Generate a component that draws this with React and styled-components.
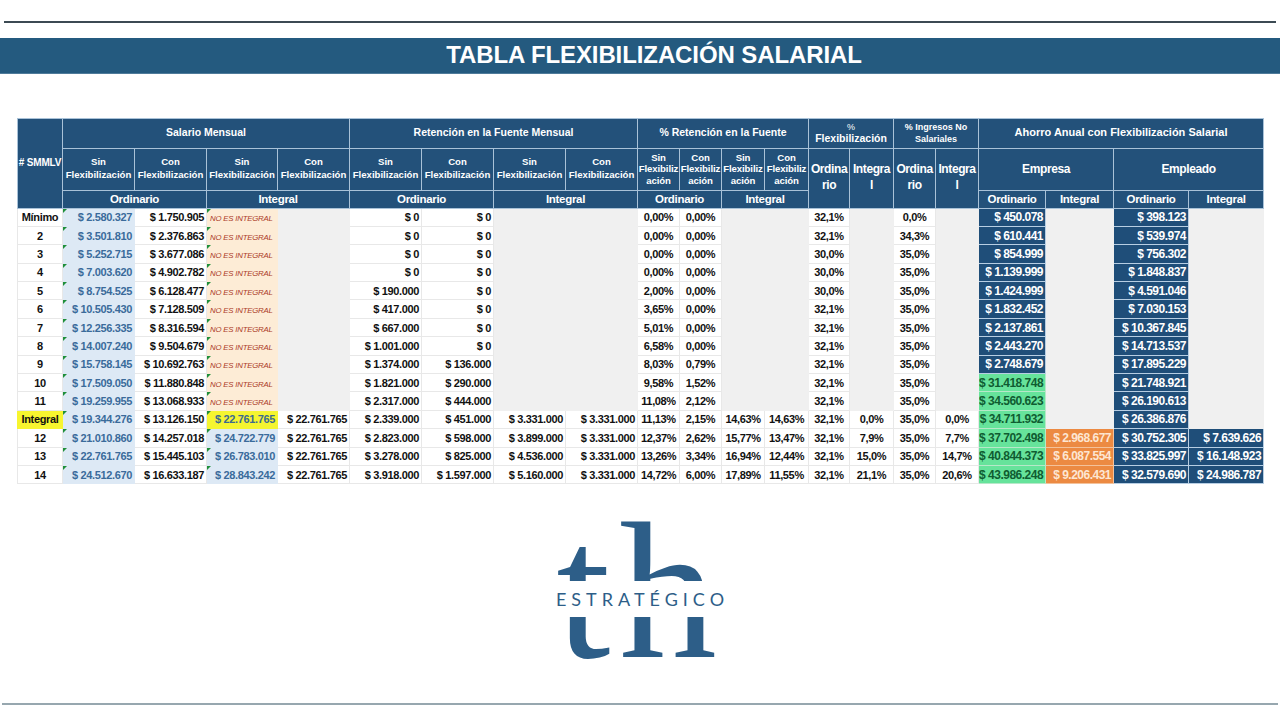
import React from 'react';
import styled, { createGlobalStyle, css } from 'styled-components';

const SANS = '"Liberation Sans", Arial, sans-serif';

const GlobalStyle = createGlobalStyle`
  html, body {
    margin: 0;
    padding: 0;
    background: #ffffff;
  }
  body {
    font-family: ${SANS};
  }
`;

const Page = styled.div`
  width: 1280px;
  height: 720px;
  display: flex;
  flex-direction: column;
  overflow: hidden;
`;

const TopRule = styled.div`
  margin: 21px 4px 0;
  height: 1.5px;
  background: #3c4a53;
`;

const TitleBar = styled.h1`
  margin: 15px 0 0;
  padding-left: 28px;
  height: 35px;
  background: #245a7f;
  border-bottom: 1px solid #4f7b9a;
  display: flex;
  align-items: center;
  justify-content: center;
  color: #ffffff;
  font: 700 24px ${SANS};
  letter-spacing: -0.1px;
`;

const TableWrap = styled.div`
  padding: 44px 0 0 17px;
`;

const Grid = styled.table`
  border-collapse: collapse;
  table-layout: fixed;
  width: 1246px;
`;

const HeadRow = styled.tr`
  height: ${(p) => p.$h}px;
`;

const Th = styled.th`
  background: #23517a;
  color: #ffffff;
  border: 1px solid #a9c2d8;
  padding: 0;
  font-family: ${SANS};
  font-size: ${(p) => p.$size || 10}px;
  font-weight: 700;
  letter-spacing: ${(p) => p.$ls || 0}px;
  line-height: ${(p) => p.$lh || 1.25};
  text-align: center;
  vertical-align: middle;
  white-space: nowrap;
  overflow: hidden;
`;

const Pct = styled.span`
  display: block;
  font-size: 9px;
  font-weight: 400;
`;

const BodyRow = styled.tr`
  height: 18.4px;
`;

const tones = {
  white: css`
    background: #ffffff;
    color: #111111;
    border-color: #e8e8e8;
  `,
  label: css`
    background: #ffffff;
    color: #111111;
    border-color: #e8e8e8;
  `,
  mark: css`
    background: #f7f52f;
    color: #111111;
    border-color: #f7f52f;
  `,
  blue: css`
    background: #dde9f5;
    color: #3a6b9b;
    border-color: #dde9f5;
  `,
  yellow: css`
    background: #f5f530;
    color: #3b6a90;
    border-color: #f5f530;
  `,
  note: css`
    background: #fdecd6;
    color: #ac3b28;
    border-color: #fdecd6;
  `,
  grey: css`
    background: #f0f0f0;
    border-color: #f0f0f0;
  `,
  navy: css`
    background: #1f4e79;
    color: #ffffff;
    border-color: #b7cee3;
  `,
  green: css`
    background: #66e39b;
    color: #0f5c31;
    border-color: #b7e8c9;
  `,
  orange: css`
    background: #ec8a42;
    color: #fde6d2;
    border-color: #f3c29b;
  `,
};

const Td = styled.td`
  position: relative;
  padding: 0 ${(p) => (p.$align === 'right' ? 2 : 0)}px 0 ${(p) => (p.$align === 'left' ? 3 : 0)}px;
  border: 1px solid;
  font-family: ${SANS};
  font-size: ${(p) => (p.$big ? 12 : 11)}px;
  letter-spacing: ${(p) => (p.$big ? -0.5 : -0.35)}px;
  font-weight: 700;
  white-space: nowrap;
  overflow: hidden;
  text-align: ${(p) => p.$align || 'center'};
  vertical-align: middle;
  ${(p) => tones[p.$tone || 'white']}
  ${(p) =>
    p.$flag &&
    css`
      &::before {
        content: '';
        position: absolute;
        top: 0;
        left: 0;
        border-top: 4px solid #1f8f3a;
        border-right: 4px solid transparent;
      }
    `}
`;

const NoteText = styled.span`
  font-family: ${SANS};
  font-size: 7.8px;
  font-style: italic;
  font-weight: 400;
  letter-spacing: -0.2px;
`;

const LogoArea = styled.div`
  display: flex;
  justify-content: center;
  margin-top: 10px;
`;

const LogoMark = styled.div`
  position: relative;
  margin-left: 2px;
  font: 400 195px/1 "Liberation Serif", "Times New Roman", serif;
  color: #2d5e88;
  letter-spacing: 9px;
`;

const LogoWord = styled.span`
  position: absolute;
  top: 87px;
  left: 50%;
  transform: translateX(-50%);
  background: #ffffff;
  padding: 9px 3px 9px 6px;
  font: 400 18px/18px Lato, "Open Sans", sans-serif;
  letter-spacing: 5px;
  color: #2d5e88;
  white-space: nowrap;
`;

const BottomRule = styled.div`
  margin: auto 2px 15px;
  height: 2px;
  background: #97a7af;
`;

const colWidths = [45, 72, 72, 71, 72, 72, 72, 72, 72, 42, 42, 43, 44, 41, 44, 42, 43, 67, 68, 75, 75];

const ordinary = [
  ['Mínimo', '$ 2.580.327', '$ 1.750.905', '$ 0', '$ 0', '0,00%', '0,00%', '32,1%', '0,0%', '$ 450.078', '$ 398.123'],
  ['2', '$ 3.501.810', '$ 2.376.863', '$ 0', '$ 0', '0,00%', '0,00%', '32,1%', '34,3%', '$ 610.441', '$ 539.974'],
  ['3', '$ 5.252.715', '$ 3.677.086', '$ 0', '$ 0', '0,00%', '0,00%', '30,0%', '35,0%', '$ 854.999', '$ 756.302'],
  ['4', '$ 7.003.620', '$ 4.902.782', '$ 0', '$ 0', '0,00%', '0,00%', '30,0%', '35,0%', '$ 1.139.999', '$ 1.848.837'],
  ['5', '$ 8.754.525', '$ 6.128.477', '$ 190.000', '$ 0', '2,00%', '0,00%', '30,0%', '35,0%', '$ 1.424.999', '$ 4.591.046'],
  ['6', '$ 10.505.430', '$ 7.128.509', '$ 417.000', '$ 0', '3,65%', '0,00%', '32,1%', '35,0%', '$ 1.832.452', '$ 7.030.153'],
  ['7', '$ 12.256.335', '$ 8.316.594', '$ 667.000', '$ 0', '5,01%', '0,00%', '32,1%', '35,0%', '$ 2.137.861', '$ 10.367.845'],
  ['8', '$ 14.007.240', '$ 9.504.679', '$ 1.001.000', '$ 0', '6,58%', '0,00%', '32,1%', '35,0%', '$ 2.443.270', '$ 14.713.537'],
  ['9', '$ 15.758.145', '$ 10.692.763', '$ 1.374.000', '$ 136.000', '8,03%', '0,79%', '32,1%', '35,0%', '$ 2.748.679', '$ 17.895.229'],
  ['10', '$ 17.509.050', '$ 11.880.848', '$ 1.821.000', '$ 290.000', '9,58%', '1,52%', '32,1%', '35,0%', '$ 31.418.748', '$ 21.748.921'],
  ['11', '$ 19.259.955', '$ 13.068.933', '$ 2.317.000', '$ 444.000', '11,08%', '2,12%', '32,1%', '35,0%', '$ 34.560.623', '$ 26.190.613'],
];

const integral = [
  ['Integral', '$ 19.344.276', '$ 13.126.150', '$ 22.761.765', '$ 22.761.765', '$ 2.339.000', '$ 451.000', '$ 3.331.000', '$ 3.331.000', '11,13%', '2,15%', '14,63%', '14,63%', '32,1%', '0,0%', '35,0%', '0,0%', '$ 34.711.932', null, '$ 26.386.876', null],
  ['12', '$ 21.010.860', '$ 14.257.018', '$ 24.722.779', '$ 22.761.765', '$ 2.823.000', '$ 598.000', '$ 3.899.000', '$ 3.331.000', '12,37%', '2,62%', '15,77%', '13,47%', '32,1%', '7,9%', '35,0%', '7,7%', '$ 37.702.498', '$ 2.968.677', '$ 30.752.305', '$ 7.639.626'],
  ['13', '$ 22.761.765', '$ 15.445.103', '$ 26.783.010', '$ 22.761.765', '$ 3.278.000', '$ 825.000', '$ 4.536.000', '$ 3.331.000', '13,26%', '3,34%', '16,94%', '12,44%', '32,1%', '15,0%', '35,0%', '14,7%', '$ 40.844.373', '$ 6.087.554', '$ 33.825.997', '$ 16.148.923'],
  ['14', '$ 24.512.670', '$ 16.633.187', '$ 28.843.242', '$ 22.761.765', '$ 3.918.000', '$ 1.597.000', '$ 5.160.000', '$ 3.331.000', '14,72%', '6,00%', '17,89%', '11,55%', '32,1%', '21,1%', '35,0%', '20,6%', '$ 43.986.248', '$ 9.206.431', '$ 32.579.690', '$ 24.986.787'],
];

const ordinaryCells = (r, i) => [
  { v: r[0], tone: 'label' },
  { v: r[1], tone: 'blue', align: 'right', flag: true },
  { v: r[2], align: 'right' },
  { v: <NoteText>NO ES INTEGRAL</NoteText>, tone: 'note', align: 'left', flag: true },
  { tone: 'grey' },
  { v: r[3], align: 'right' },
  { v: r[4], align: 'right' },
  { tone: 'grey' },
  { tone: 'grey' },
  { v: r[5] },
  { v: r[6] },
  { tone: 'grey' },
  { tone: 'grey' },
  { v: r[7] },
  { tone: 'grey' },
  { v: r[8] },
  { tone: 'grey' },
  { v: r[9], tone: i >= 9 ? 'green' : 'navy', align: 'right', big: true },
  { tone: 'grey' },
  { v: r[10], tone: 'navy', align: 'right', big: true },
  { tone: 'grey' },
];

const integralCells = (r, i) => {
  const first = i === 0;
  return [
    { v: r[0], tone: first ? 'mark' : 'label' },
    { v: r[1], tone: 'blue', align: 'right', flag: true },
    { v: r[2], align: 'right' },
    { v: r[3], tone: first ? 'yellow' : 'blue', align: 'right', flag: true },
    { v: r[4], align: 'right' },
    ...r.slice(5, 9).map((v) => ({ v, align: 'right' })),
    ...r.slice(9, 17).map((v) => ({ v })),
    { v: r[17], tone: 'green', align: 'right', big: true },
    r[18] ? { v: r[18], tone: 'orange', align: 'right', big: true } : { tone: 'grey' },
    { v: r[19], tone: 'navy', align: 'right', big: true },
    r[20] ? { v: r[20], tone: 'navy', align: 'right', big: true } : { tone: 'grey' },
  ];
};

const DataRow = ({ cells }) => (
  <BodyRow>
    {cells.map((c, k) => (
      <Td key={k} $tone={c.tone} $align={c.align} $flag={c.flag} $big={c.big}>
        {c.v}
      </Td>
    ))}
  </BodyRow>
);

const SinCon = ({ split }) =>
  ['Sin', 'Con'].map((w) => (
    <Th key={w} $size={9.6} $lh={split ? 1.2 : 1.35} $ls={split ? -0.1 : 0}>
      {w}
      <br />
      {split ? (
        <>
          Flexibiliz
          <br />
          ación
        </>
      ) : (
        'Flexibilización'
      )}
    </Th>
  ));

const GroupLabels = () => (
  <>
    <Th colSpan={2} $size={11.5} $ls={-0.3}>Ordinario</Th>
    <Th colSpan={2} $size={11.5} $ls={-0.3}>Integral</Th>
  </>
);

const FlexTable = () => (
  <Grid>
    <colgroup>
      {colWidths.map((w, i) => (
        <col key={i} style={{ width: w }} />
      ))}
    </colgroup>
    <thead>
      <HeadRow $h={30}>
        <Th rowSpan={3} $size={10} $ls={-0.2}># SMMLV</Th>
        <Th colSpan={4} $size={10.5}>Salario Mensual</Th>
        <Th colSpan={4} $size={10.5}>Retención en la Fuente Mensual</Th>
        <Th colSpan={4} $size={10.5}>% Retención en la Fuente</Th>
        <Th colSpan={2} $size={10.5} $lh={1.15}>
          <Pct>%</Pct>
          Flexibilización
        </Th>
        <Th colSpan={2} $size={9} $lh={1.35}>
          % Ingresos No
          <br />
          Salariales
        </Th>
        <Th colSpan={4} $size={11}>Ahorro Anual con Flexibilización Salarial</Th>
      </HeadRow>
      <HeadRow $h={42}>
        <SinCon />
        <SinCon />
        <SinCon />
        <SinCon />
        <SinCon split />
        <SinCon split />
        {['Ordina|rio', 'Integra|l', 'Ordina|rio', 'Integra|l'].map((t, i) => (
          <Th key={i} rowSpan={2} $size={12} $ls={-0.4} $lh={1.3}>
            {t.split('|')[0]}
            <br />
            {t.split('|')[1]}
          </Th>
        ))}
        <Th colSpan={2} $size={12} $ls={-0.4}>Empresa</Th>
        <Th colSpan={2} $size={12} $ls={-0.4}>Empleado</Th>
      </HeadRow>
      <HeadRow $h={18}>
        <GroupLabels />
        <GroupLabels />
        <GroupLabels />
        {['Ordinario', 'Integral', 'Ordinario', 'Integral'].map((t, i) => (
          <Th key={i} $size={11.5} $ls={-0.3}>{t}</Th>
        ))}
      </HeadRow>
    </thead>
    <tbody>
      {ordinary.map((r, i) => (
        <DataRow key={r[0]} cells={ordinaryCells(r, i)} />
      ))}
      {integral.map((r, i) => (
        <DataRow key={r[0]} cells={integralCells(r, i)} />
      ))}
    </tbody>
  </Grid>
);

export default function App() {
  return (
    <Page>
      <GlobalStyle />
      <TopRule />
      <TitleBar>TABLA FLEXIBILIZACIÓN SALARIAL</TitleBar>
      <TableWrap>
        <FlexTable />
      </TableWrap>
      <LogoArea>
        <LogoMark>
          th
          <LogoWord>ESTRATÉGICO</LogoWord>
        </LogoMark>
      </LogoArea>
      <BottomRule />
    </Page>
  );
}
